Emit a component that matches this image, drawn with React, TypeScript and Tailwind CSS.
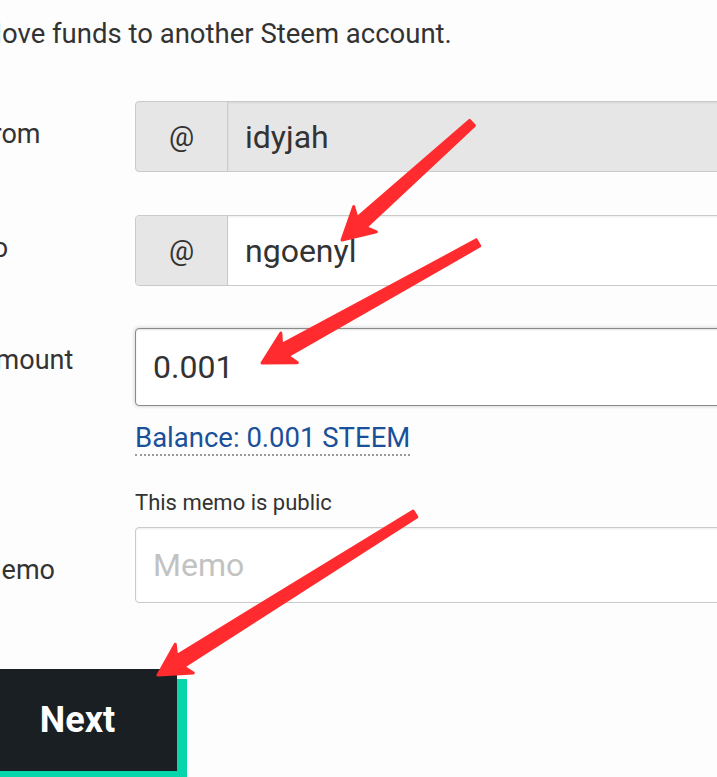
import React from "react";

type Pt = [number, number];

const arrows: { tail: Pt; tip: Pt }[] = [
  { tail: [472, 123], tip: [342, 240] },
  { tail: [478, 243], tip: [262, 363] },
  { tail: [415, 514], tip: [158, 675] },
];

// tapered annotation arrow, built from tail/tip
const arrowPoints = (tail: Pt, tip: Pt) => {
  const dx = tail[0] - tip[0];
  const dy = tail[1] - tip[1];
  const len = Math.hypot(dx, dy);
  const ux = dx / len;
  const uy = dy / len;
  const nx = -uy;
  const ny = ux;
  const L = 31;
  const W = 17;
  const at = (d: number, w: number, from: Pt = tip) =>
    `${from[0] + ux * d + nx * w},${from[1] + uy * d + ny * w}`;
  return [
    at(0, 0),
    at(L, W),
    at(L - 5, 6.5),
    at(0, 3.5, tail),
    at(0, -3.5, tail),
    at(L - 5, -6.5),
    at(L, -W),
  ].join(" ");
};

const Row = ({ label, pad, children }: { label: string; pad: string; children: React.ReactNode }) => (
  <div className="flex items-start">
    <div className={`w-[157px] shrink-0 text-[27px] leading-[30px] text-[#333] ${pad}`}>{label}</div>
    {children}
  </div>
);

export default function App() {
  return (
    <div className="relative w-[717px] h-[777px] overflow-hidden bg-[#fdfdfd] font-['Roboto',sans-serif] text-[#333]">
      <div className="ml-[-22px] w-[900px]">
        <p className="pt-[18px] text-[27.5px] leading-[32px]">Move funds to another Steem account.</p>

        <div className="mt-[51px]">
          <Row label="From" pad="pt-[18px]">
            <div className="flex h-[71px] w-[700px] rounded-[4px] border border-[#cacaca] bg-[#e6e6e6]">
              <span className="flex w-[92px] items-center justify-center border-r border-[#cacaca] text-[28px]">@</span>
              <span className="flex flex-1 items-center pl-[17px] text-[32px] text-[#333] shadow-[inset_0_1px_2px_rgba(0,0,0,0.08)]">idyjah</span>
            </div>
          </Row>
        </div>

        <div className="mt-[43px]">
          <Row label="To" pad="pt-[18px]">
            <div className="flex h-[71px] w-[700px] rounded-[4px] border border-[#cacaca] bg-white">
              <span className="flex w-[92px] items-center justify-center rounded-l-[4px] border-r border-[#cacaca] bg-[#e6e6e6] text-[28px]">@</span>
              <span className="flex flex-1 items-center pl-[17px] text-[32px] text-[#333] shadow-[inset_0_1px_2px_rgba(0,0,0,0.08)]">ngoenyl</span>
            </div>
          </Row>
        </div>

        <div className="mt-[42px]">
          <Row label="Amount" pad="pt-[17px]">
            <div className="flex h-[78px] w-[700px] items-center rounded-[4px] border border-[#8a8a8a] bg-white pl-[17px] text-[32px] shadow-[inset_0_1px_2px_rgba(0,0,0,0.12),0_0_4px_#cacaca]">
              0.001
            </div>
          </Row>
        </div>

        <div className="ml-[157px] mt-[17px]">
          <span className="inline-block border-b-2 border-dotted border-[#9a9a9a] pb-[1px] text-[27.5px] leading-[30px] text-[#1a5099]">
            Balance: 0.001 STEEM
          </span>
        </div>

        <p className="ml-[157px] mt-[34px] text-[22px] leading-[26px]">This memo is public</p>

        <div className="mt-[11px]">
          <Row label="Memo" pad="pt-[28px]">
            <div className="flex h-[76px] w-[700px] items-center rounded-[4px] border border-[#cacaca] bg-white pl-[17px] text-[32px] text-[#c2c2c2] shadow-[inset_0_1px_2px_rgba(0,0,0,0.08)]">
              Memo
            </div>
          </Row>
        </div>

        <button className="mt-[66px] flex h-[102px] w-[199px] items-center justify-center bg-[#1a1f24] text-[36px] font-bold text-white shadow-[10px_10px_0_#06d6a9]">
          Next
        </button>
      </div>

      <svg className="pointer-events-none absolute inset-0" width="717" height="777" viewBox="0 0 717 777">
        {arrows.map((a, i) => (
          <polygon
            key={i}
            points={arrowPoints(a.tail, a.tip)}
            fill="#ff2b2e"
            stroke="#ff2b2e"
            strokeWidth="3"
            strokeLinejoin="round"
          />
        ))}
      </svg>
    </div>
  );
}
